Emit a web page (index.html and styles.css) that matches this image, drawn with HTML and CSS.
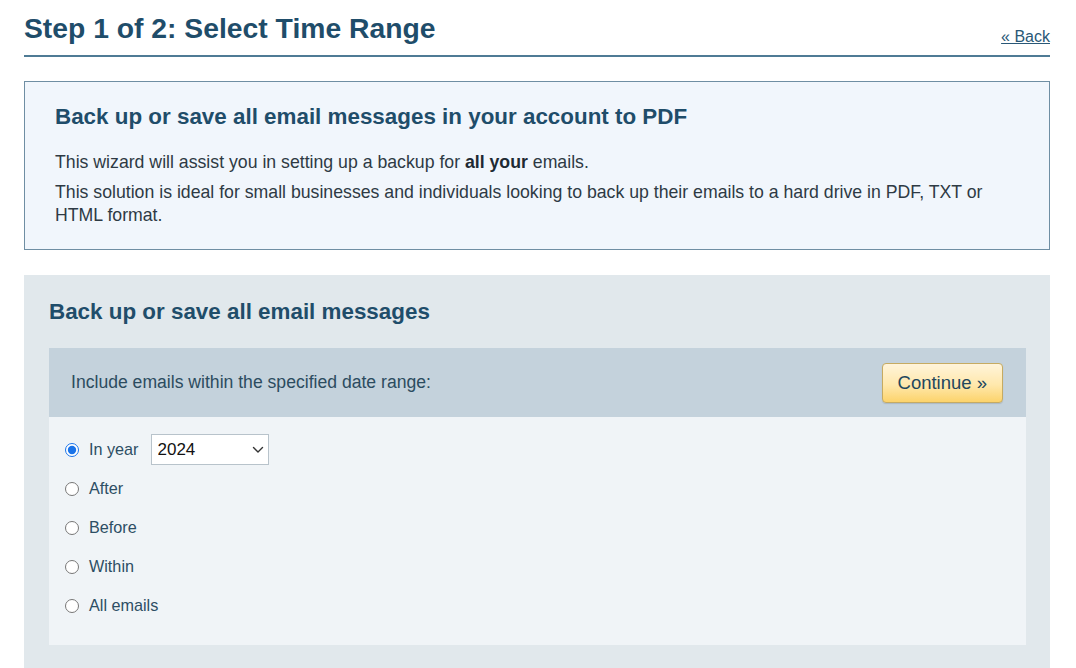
FILE: index.html
```html
<!DOCTYPE html>
<html lang="en">
<head>
<meta charset="utf-8">
<title>Step 1 of 2: Select Time Range</title>
<link rel="stylesheet" href="styles.css">
</head>
<body>
<div class="page">
  <header class="page-header">
    <h1 class="page-title">Step 1 of 2: Select Time Range</h1>
    <a class="back-link" href="#">« Back</a>
  </header>

  <section class="info-box">
    <h2 class="info-title">Back up or save all email messages in your account to PDF</h2>
    <p class="info-text">This wizard will assist you in setting up a backup for <strong>all your</strong> emails.</p>
    <p class="info-text">This solution is ideal for small businesses and individuals looking to back up their emails to a hard drive in PDF, TXT or HTML format.</p>
  </section>

  <section class="panel">
    <h2 class="panel-title">Back up or save all email messages</h2>
    <div class="range-bar">
      <span class="range-label">Include emails within the specified date range:</span>
      <button class="continue-btn" type="button">Continue »</button>
    </div>
    <div class="options">
      <label class="option">
        <input class="radio" type="radio" name="range" checked>
        <span class="option-text">In year</span>
        <span class="select-wrap">
          <select class="year-select">
            <option>2024</option>
            <option>2023</option>
            <option>2022</option>
          </select>
          <svg class="chevron" width="12" height="8" viewBox="0 0 12 8"><path d="M1.5 1.5 L6 6 L10.5 1.5" fill="none" stroke="#333" stroke-width="1.4" stroke-linecap="round" stroke-linejoin="round"/></svg>
        </span>
      </label>
      <label class="option">
        <input class="radio" type="radio" name="range">
        <span class="option-text">After</span>
      </label>
      <label class="option">
        <input class="radio" type="radio" name="range">
        <span class="option-text">Before</span>
      </label>
      <label class="option">
        <input class="radio" type="radio" name="range">
        <span class="option-text">Within</span>
      </label>
      <label class="option">
        <input class="radio" type="radio" name="range">
        <span class="option-text">All emails</span>
      </label>
    </div>
  </section>
</div>
</body>
</html>
```

FILE: styles.css
```css
* { box-sizing: border-box; }

html, body {
  margin: 0;
  padding: 0;
  background: #ffffff;
  font-family: "Liberation Sans", Arial, Helvetica, sans-serif;
  color: #333333;
}

.page {
  width: 1026px;
  margin-left: 24px;
}

.page-header {
  display: flex;
  justify-content: space-between;
  align-items: flex-end;
  padding-top: 12px;
  padding-bottom: 11px;
  border-bottom: 2px solid #4f7b95;
}

.page-title {
  margin: 0;
  font-size: 28.3px;
  line-height: 32px;
  font-weight: bold;
  color: #1f4d6a;
}

.back-link {
  font-size: 16px;
  line-height: 18px;
  color: #2a5877;
  text-decoration: underline;
  margin-bottom: -2px;
}

.info-box {
  margin-top: 24px;
  background: #f1f6fc;
  border: 1px solid #6f8ea3;
  padding: 22px 30px 22px;
}

.info-title {
  margin: 0 0 21px;
  font-size: 22.4px;
  line-height: 26px;
  font-weight: bold;
  color: #1f4d6a;
}

.info-text {
  margin: 0;
  font-size: 17.7px;
  line-height: 23px;
  color: #2e3a44;
}

.info-text + .info-text {
  margin-top: 7px;
}

.info-text strong {
  color: #1e2a33;
}

.panel {
  margin-top: 25px;
  background: #e1e8ec;
  padding: 24px 24px 24px 25px;
}

.panel-title {
  margin: 0 0 23px;
  font-size: 22.4px;
  line-height: 26px;
  font-weight: bold;
  color: #1f4d6a;
}

.range-bar {
  display: flex;
  justify-content: space-between;
  align-items: center;
  height: 69px;
  padding: 0 23px 0 22px;
  background: #c4d2dc;
}

.range-label {
  font-size: 17.6px;
  color: #2c4c60;
}

.continue-btn {
  height: 40px;
  padding: 0 15px;
  font-family: "Liberation Sans", Arial, Helvetica, sans-serif;
  font-size: 18.5px;
  color: #23475d;
  background: linear-gradient(to bottom, #fff4da 0%, #ffe8ac 55%, #fcd36b 100%);
  border: 1px solid #c6ab62;
  border-radius: 4px;
  box-shadow: 0 1px 1px rgba(0, 0, 0, 0.12);
  cursor: pointer;
}

.options {
  background: #f0f4f7;
  padding: 13px 16px 20px;
  display: flex;
  flex-direction: column;
}

.option {
  display: flex;
  align-items: center;
  height: 39px;
  cursor: pointer;
}

.radio {
  margin: 0;
  width: 14px;
  height: 14px;
  accent-color: #1a73e8;
}

.option-text {
  margin-left: 10px;
  font-size: 16.2px;
  color: #2d4e64;
}

.select-wrap {
  position: relative;
  display: inline-block;
  margin-left: 12px;
}

.year-select {
  -webkit-appearance: none;
  appearance: none;
  width: 118px;
  height: 31px;
  padding: 0 24px 0 6px;
  font-family: "Liberation Sans", Arial, Helvetica, sans-serif;
  font-size: 17px;
  color: #111111;
  background: #ffffff;
  border: 1px solid #b8c3cb;
  border-radius: 0;
}

.chevron {
  position: absolute;
  right: 5px;
  top: 12px;
  pointer-events: none;
}
```
